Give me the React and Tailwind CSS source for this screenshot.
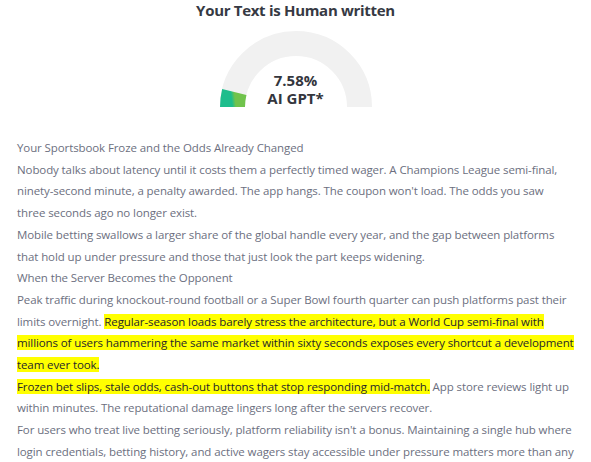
import React from 'react';

const Hl = ({ children }) => (
    <span className="bg-[#ffff00] text-[#26262b]">{children}</span>
);

const Gauge = ({ percent }) => {
    // semicircle, outer radius 76, ring thickness 25
    const r = 63.5;
    const cx = 76;
    const cy = 76;
    const a = Math.PI - (percent / 100) * Math.PI;
    const ex = cx + r * Math.cos(a);
    const ey = cy - r * Math.sin(a);
    return (
        <div className="relative w-[152px] h-[76px]">
            <svg width="152" height="76" viewBox="0 0 152 76">
                <defs>
                    <linearGradient id="gg" x1="0" y1="1" x2="1" y2="0">
                        <stop offset="0%" stopColor="#1dbd8c" />
                        <stop offset="100%" stopColor="#70c34c" />
                    </linearGradient>
                </defs>
                <path
                    d={`M ${cx - r} ${cy} A ${r} ${r} 0 0 1 ${cx + r} ${cy}`}
                    fill="none"
                    stroke="#f1f1f1"
                    strokeWidth="25"
                />
                <path
                    d={`M ${cx - r} ${cy} A ${r} ${r} 0 0 1 ${ex} ${ey}`}
                    fill="none"
                    stroke="url(#gg)"
                    strokeWidth="25"
                />
            </svg>
            <div className="absolute inset-x-0 top-[40px] flex flex-col items-center text-[15px] font-bold leading-[18px] text-[#34363d]">
                <span>7.58%</span>
                <span>AI GPT*</span>
            </div>
        </div>
    );
};

export default function App() {
    return (
        <div className="w-[591px] h-[462px] overflow-hidden bg-white font-['Open_Sans',sans-serif]">
            {/* Result header */}
            <div className="flex flex-col items-center">
                <h1 className="text-[15px] font-bold leading-[20px] tracking-[-0.3px] text-[#363943]">Your Text is Human written</h1>
                <div className="mt-[11px]">
                    <Gauge percent={7.58} />
                </div>
            </div>

            {/* Analysed text */}
            <div className="mt-[30px] px-[17px] text-[11.5px] leading-[21.7px] tracking-[-0.1px] text-[#6c6f80] whitespace-nowrap">
                <p>Your Sportsbook Froze and the Odds Already Changed</p>
                <p>
                    Nobody talks about latency until it costs them a perfectly timed wager. A Champions League semi-final,<br />
                    ninety-second minute, a penalty awarded. The app hangs. The coupon won't load. The odds you saw<br />
                    three seconds ago no longer exist.
                </p>
                <p>
                    Mobile betting swallows a larger share of the global handle every year, and the gap between platforms<br />
                    that hold up under pressure and those that just look the part keeps widening.
                </p>
                <p>When the Server Becomes the Opponent</p>
                <p>
                    Peak traffic during knockout-round football or a Super Bowl fourth quarter can push platforms past their<br />
                    limits overnight. <Hl>Regular-season loads barely stress the architecture, but a World Cup semi-final with<br />
                    millions of users hammering the same market within sixty seconds exposes every shortcut a development<br />
                    team ever took.</Hl>
                </p>
                <p>
                    <Hl>Frozen bet slips, stale odds, cash-out buttons that stop responding mid-match.</Hl> App store reviews light up<br />
                    within minutes. The reputational damage lingers long after the servers recover.
                </p>
                <p>
                    For users who treat live betting seriously, platform reliability isn't a bonus. Maintaining a single hub where<br />
                    login credentials, betting history, and active wagers stay accessible under pressure matters more than any
                </p>
            </div>
        </div>
    );
}
